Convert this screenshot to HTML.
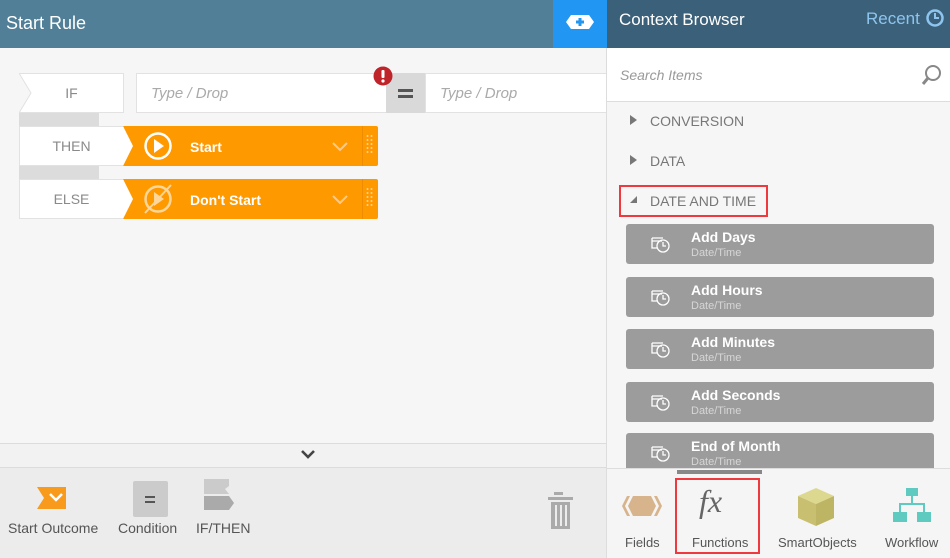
<!DOCTYPE html>
<html><head><style>
*{margin:0;padding:0;box-sizing:border-box}
body{width:950px;height:558px;overflow:hidden;font-family:"Liberation Sans",sans-serif;background:#f6f6f6;position:relative}
.a{position:absolute}
.lbl{background:#fff;border:1px solid #e2e2e2;color:#8a8a8a;font-size:14px;display:flex;align-items:center;justify-content:center}
.inp{background:#fff;border:1px solid #e2e2e2;color:#aaa;font-style:italic;font-size:15px;padding-left:14px;display:flex;align-items:center}
.or{background:#ff9900;color:#fff;font-size:14px;font-weight:bold;border-radius:0 2px 2px 0}
.item{left:626px;width:308px;height:40px;background:#9c9c9c;border-radius:3px;color:#fff}
.item .t{position:absolute;left:65px;top:5px;font-size:14px;font-weight:bold}
.item .s{position:absolute;left:65px;top:23px;font-size:11px;color:#d6d6d6}
.item svg{position:absolute;left:24px;top:10px}
.cat{left:630px;color:#777;font-size:14px}
.tb{font-size:14px;color:#555}
.tb2{font-size:13px;color:#555}
</style></head><body>
<div class="a" style="left:0;top:0;width:553px;height:48px;background:#517f97;color:#fff;font-size:18px;padding:13px 6px">Start Rule</div>
<div class="a" style="left:553px;top:0;width:54px;height:48px;background:#2196f3">
<svg class="a" style="left:12px;top:14px" width="30" height="16"><path d="M6 1H24L29 8L24 15H6L1 8Z" fill="#fff"/><path d="M15 4V12M11 8H19" stroke="#2196f3" stroke-width="3"/></svg></div>
<div class="a" style="left:607px;top:0;width:343px;height:48px;background:#3b6079;color:#fff;font-size:17px;padding:10px 12px">Context Browser</div>
<div class="a" style="left:866px;top:9px;color:#8ec5ef;font-size:17px">Recent</div>
<svg class="a" style="left:926px;top:9px" width="18" height="18"><circle cx="9" cy="9" r="7.5" fill="none" stroke="#8ec5ef" stroke-width="2.5"/><path d="M9 4V9H13" stroke="#8ec5ef" stroke-width="2" fill="none"/></svg>

<div class="a lbl" style="left:19px;top:73px;width:105px;height:40px">IF</div>
<svg class="a" style="left:19px;top:73px" width="14" height="40"><path d="M0 0L12 20L0 40" fill="#f6f6f6" stroke="#e2e2e2"/></svg>
<div class="a inp" style="left:136px;top:73px;width:251px;height:40px">Type / Drop</div>
<div class="a" style="left:386px;top:73px;width:39px;height:40px;background:#d9d9d9"><div class="a" style="left:12px;top:16px;width:15px;height:3px;background:#555"></div><div class="a" style="left:12px;top:22px;width:15px;height:3px;background:#555"></div></div>
<div class="a inp" style="left:425px;top:73px;width:182px;height:40px">Type / Drop</div>
<svg class="a" style="left:373px;top:66px" width="20" height="20"><circle cx="10" cy="10" r="9.5" fill="#c0242b"/><rect x="8.5" y="4" width="3" height="8" rx="1" fill="#fff"/><circle cx="10" cy="15" r="1.6" fill="#fff"/></svg>
<div class="a" style="left:19px;top:113px;width:80px;height:13px;background:#dcdcdc"></div>
<div class="a" style="left:19px;top:166px;width:80px;height:13px;background:#dcdcdc"></div>

<div class="a lbl" style="left:19px;top:126px;width:105px;height:40px">THEN</div>
<div class="a or" style="left:123px;top:126px;width:255px;height:40px"></div>
<svg class="a" style="left:123px;top:126px" width="12" height="40"><path d="M0 0L10 20L0 40" fill="#fff"/></svg>
<svg class="a" style="left:143px;top:131px" width="30" height="30"><circle cx="15" cy="15" r="12.5" fill="none" stroke="#fff" stroke-width="2.5"/><path d="M11 8L21 15L11 22Z" fill="#fff"/></svg>
<div class="a" style="left:190px;top:139px;color:#fff;font-size:14px;font-weight:bold">Start</div>

<div class="a lbl" style="left:19px;top:179px;width:105px;height:40px">ELSE</div>
<div class="a or" style="left:123px;top:179px;width:255px;height:40px"></div>
<svg class="a" style="left:123px;top:179px" width="12" height="40"><path d="M0 0L10 20L0 40" fill="#fff"/></svg>
<svg class="a" style="left:143px;top:184px" width="30" height="30" opacity=".6"><circle cx="15" cy="15" r="12.5" fill="none" stroke="#fff" stroke-width="2.5"/><path d="M11 8L21 15L11 22Z" fill="#fff"/><path d="M2 29L28 1" stroke="#fff" stroke-width="2"/></svg>
<div class="a" style="left:190px;top:192px;color:#fff;font-size:14px;font-weight:bold">Don't Start</div>
<svg class="a" style="left:330px;top:140px" width="360" height="70">
<path d="M3 3L10 10L17 3" stroke="#ffc98a" stroke-width="2" fill="none"/><path d="M3 56L10 63L17 56" stroke="#ffc98a" stroke-width="2" fill="none"/></svg>
<div class="a" style="left:362px;top:126px;width:1px;height:40px;background:#f08c00"></div>
<div class="a" style="left:362px;top:179px;width:1px;height:40px;background:#f08c00"></div>
<svg class="a" style="left:366px;top:135px" width="8" height="80" fill="#ffd39a"><g><circle cx="1.5" cy="1" r="1"/><circle cx="5.5" cy="1" r="1"/><circle cx="1.5" cy="5" r="1"/><circle cx="5.5" cy="5" r="1"/><circle cx="1.5" cy="9" r="1"/><circle cx="5.5" cy="9" r="1"/><circle cx="1.5" cy="13" r="1"/><circle cx="5.5" cy="13" r="1"/><circle cx="1.5" cy="17" r="1"/><circle cx="5.5" cy="17" r="1"/></g><g transform="translate(0,53)"><circle cx="1.5" cy="1" r="1"/><circle cx="5.5" cy="1" r="1"/><circle cx="1.5" cy="5" r="1"/><circle cx="5.5" cy="5" r="1"/><circle cx="1.5" cy="9" r="1"/><circle cx="5.5" cy="9" r="1"/><circle cx="1.5" cy="13" r="1"/><circle cx="5.5" cy="13" r="1"/><circle cx="1.5" cy="17" r="1"/><circle cx="5.5" cy="17" r="1"/></g></svg>

<div class="a" style="left:0;top:443px;width:607px;height:25px;background:#f2f2f2;border-top:1px solid #dcdcdc;border-bottom:1px solid #dcdcdc"></div>
<svg class="a" style="left:300px;top:449px" width="16" height="12"><path d="M2 2L8 8L14 2" stroke="#444" stroke-width="2.6" fill="none"/></svg>
<div class="a" style="left:0;top:468px;width:607px;height:90px;background:#ececec"></div>
<svg class="a" style="left:37px;top:487px" width="40" height="24"><path d="M0 0H29V22H0L7 11Z" fill="#f89a1c"/><path d="M13 7L19 13L25 7" stroke="#fff" stroke-width="2.5" fill="none"/></svg>
<div class="a" style="left:133px;top:481px;width:35px;height:36px;background:#cbcbcb;border-radius:2px"><div class="a" style="left:12px;top:15px;width:10px;height:2px;background:#555"></div><div class="a" style="left:12px;top:20px;width:10px;height:2px;background:#555"></div></div>
<svg class="a" style="left:203px;top:478px" width="36" height="40"><path d="M1 1H26V8L22 11L26 16H1Z" fill="#cbcbcb"/><path d="M1 18H26L31 25L26 32H1Z" fill="#aaa"/></svg>
<div class="a tb" style="left:8px;top:520px">Start Outcome</div>
<div class="a tb" style="left:118px;top:520px">Condition</div>
<div class="a tb" style="left:196px;top:520px">IF/THEN</div>
<svg class="a" style="left:546px;top:490px" width="30" height="40" fill="#aaa"><rect x="8" y="2" width="9" height="3"/><rect x="2" y="7" width="25" height="3"/><path d="M5 12H24V39H5ZM9 15V36H11V15ZM14 15V36H16V15ZM19 15V36H21V15Z" fill-rule="evenodd"/></svg>

<div class="a" style="left:606px;top:48px;width:1px;height:510px;background:#ddd"></div>
<div class="a" style="left:607px;top:48px;width:343px;height:54px;background:#fff;border-bottom:1px solid #ddd"></div>
<div class="a" style="left:620px;top:67px;color:#999;font-style:italic;font-size:14px">Search Items</div>
<svg class="a" style="left:921px;top:64px" width="22" height="22"><circle cx="12" cy="9" r="7" fill="none" stroke="#888" stroke-width="2"/><path d="M7 14L2 20" stroke="#888" stroke-width="3"/></svg>
<svg class="a" style="left:629px;top:115px" width="10" height="100" fill="#777"><path d="M1 0L8 5L1 10Z"/><path d="M1 40L8 45L1 50Z"/><path d="M1 88L8 81V88Z"/></svg>
<div class="a cat" style="left:650px;top:113px">CONVERSION</div>
<div class="a cat" style="left:650px;top:153px">DATA</div>
<div class="a" style="left:619px;top:185px;width:149px;height:32px;border:2px solid #f0393e"></div>
<div class="a cat" style="left:650px;top:193px">DATE AND TIME</div>

<div class="a" style="left:607px;top:220px;width:343px;height:248px;overflow:hidden">
<div class="a item" style="left:19px;top:4px"><svg width="22" height="20"><g fill="none" stroke="#fff" stroke-width="1.3"><path d="M2 4H13M2 4V14H7M2 7H12"/><circle cx="13" cy="12" r="6"/><path d="M13 8V12H16"/></g></svg><div class="t">Add Days</div><div class="s">Date/Time</div></div>
<div class="a item" style="left:19px;top:57px"><svg width="22" height="20"><g fill="none" stroke="#fff" stroke-width="1.3"><path d="M2 4H13M2 4V14H7M2 7H12"/><circle cx="13" cy="12" r="6"/><path d="M13 8V12H16"/></g></svg><div class="t">Add Hours</div><div class="s">Date/Time</div></div>
<div class="a item" style="left:19px;top:109px"><svg width="22" height="20"><g fill="none" stroke="#fff" stroke-width="1.3"><path d="M2 4H13M2 4V14H7M2 7H12"/><circle cx="13" cy="12" r="6"/><path d="M13 8V12H16"/></g></svg><div class="t">Add Minutes</div><div class="s">Date/Time</div></div>
<div class="a item" style="left:19px;top:162px"><svg width="22" height="20"><g fill="none" stroke="#fff" stroke-width="1.3"><path d="M2 4H13M2 4V14H7M2 7H12"/><circle cx="13" cy="12" r="6"/><path d="M13 8V12H16"/></g></svg><div class="t">Add Seconds</div><div class="s">Date/Time</div></div>
<div class="a item" style="left:19px;top:213px"><svg width="22" height="20"><g fill="none" stroke="#fff" stroke-width="1.3"><path d="M2 4H13M2 4V14H7M2 7H12"/><circle cx="13" cy="12" r="6"/><path d="M13 8V12H16"/></g></svg><div class="t">End of Month</div><div class="s">Date/Time</div></div>
</div>
<div class="a" style="left:607px;top:468px;width:343px;height:90px;background:#f5f5f5;border-top:1px solid #ddd"></div>
<div class="a" style="left:677px;top:470px;width:85px;height:4px;background:#888"></div>
<div class="a" style="left:675px;top:478px;width:85px;height:76px;border:2px solid #f0393e"></div>
<svg class="a" style="left:622px;top:496px" width="40" height="20"><path d="M11 0H29L34 10L29 20H11L6 10Z" fill="#d7b48c"/><path d="M5 0L0 10L5 20H8L3 10L8 0ZM35 0L40 10L35 20H32L37 10L32 0Z" fill="#d7b48c"/></svg>
<div class="a" style="left:699px;top:483px;font-family:'Liberation Serif',serif;font-style:italic;font-size:32px;color:#666">fx</div>
<svg class="a" style="left:797px;top:487px" width="38" height="40"><path d="M19 1L37 9L19 17L1 9Z" fill="#ddd88f"/><path d="M1 9L19 17V39L1 31Z" fill="#c8c070"/><path d="M37 9L19 17V39L37 31Z" fill="#bdb563"/></svg>
<svg class="a" style="left:893px;top:488px" width="38" height="38" fill="#5ecac0"><rect x="13" y="0" width="12" height="8"/><rect x="18" y="8" width="2" height="8"/><rect x="6" y="15" width="26" height="2"/><rect x="6" y="15" width="2" height="10"/><rect x="30" y="15" width="2" height="10"/><rect x="0" y="24" width="14" height="10"/><rect x="24" y="24" width="14" height="10"/></svg>
<div class="a tb2" style="left:625px;top:535px">Fields</div>
<div class="a tb2" style="left:692px;top:535px">Functions</div>
<div class="a tb2" style="left:778px;top:535px">SmartObjects</div>
<div class="a tb2" style="left:885px;top:535px">Workflow</div>
</body></html>
